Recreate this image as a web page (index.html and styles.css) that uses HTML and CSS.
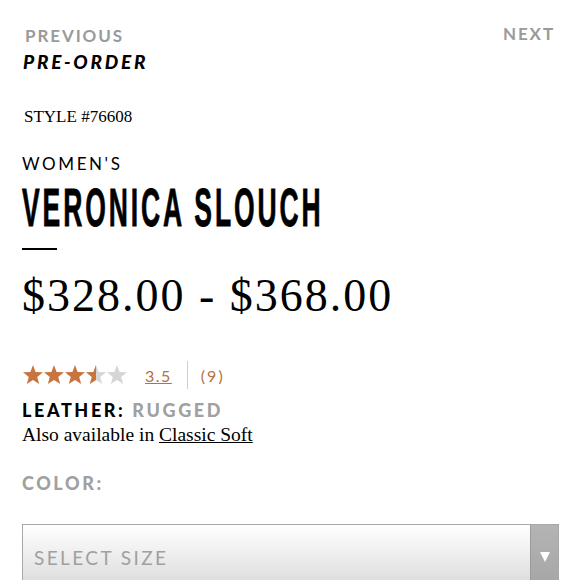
FILE: index.html
```html
<!DOCTYPE html>
<html>
<head>
<meta charset="utf-8">
<link rel="stylesheet" href="styles.css">
</head>
<body>
<div class="page">
  <div class="nav">
    <div class="nav-left">
      <div class="nav-link">PREVIOUS</div>
      <div class="preorder">PRE-ORDER</div>
    </div>
    <div class="nav-link next">NEXT</div>
  </div>
  <div class="style-no">STYLE #76608</div>
  <div class="gender">WOMEN'S</div>
  <h1 class="title"><span class="title-inner">VERONICA SLOUCH</span></h1>
  <div class="rule"></div>
  <div class="price">$328.00 - $368.00</div>
  <div class="rating">
    <svg class="stars" width="108" height="22" viewBox="0 0 108 22">
      <defs>
        <path id="star" d="M11 1 L13.6 7.9 L21 8.3 L15.2 12.9 L17.2 20.1 L11 16 L4.8 20.1 L6.8 12.9 L1 8.3 L8.4 7.9 Z"/>
        <clipPath id="half"><rect x="0" y="0" width="11" height="22"/></clipPath>
      </defs>
      <use href="#star" x="0" fill="#c8743f"/>
      <use href="#star" x="21" fill="#c8743f"/>
      <use href="#star" x="42" fill="#c8743f"/>
      <use href="#star" x="63" fill="#d6d6d6"/>
      <g transform="translate(63 0)"><use href="#star" fill="#c8743f" clip-path="url(#half)"/></g>
      <use href="#star" x="84" fill="#d6d6d6"/>
    </svg>
    <span class="score">3.5</span>
    <span class="sep"></span>
    <span class="count">(9)</span>
  </div>
  <div class="leather"><span class="label">LEATHER:</span> <span class="value">RUGGED</span></div>
  <div class="also">Also available in <span class="alt-link">Classic Soft</span></div>
  <div class="color-label">COLOR:</div>
  <div class="select">
    <span class="select-text">SELECT SIZE</span>
    <span class="select-btn"><span class="tri"></span></span>
  </div>
</div>
</body>
</html>
```
FILE: styles.css
```css
html, body {
  margin: 0;
  padding: 0;
  background: #fff;
}
.page {
  padding: 24px 22px 0 22px;
  overflow: hidden;
  height: 556px;
}
.nav {
  display: flex;
  justify-content: space-between;
  align-items: flex-start;
}
.nav-link {
  font-family: "Lato", sans-serif;
  font-weight: 700;
  font-size: 17px;
  line-height: 24px;
  letter-spacing: 1.9px;
  color: #9a9a9a;
  padding-left: 3px;
}
.next {
  padding-right: 3px;
  margin-top: -2px;
}
.preorder {
  font-family: "Lato", sans-serif;
  font-weight: 900;
  font-style: italic;
  font-size: 19px;
  line-height: 24px;
  letter-spacing: 2.8px;
  color: #000;
  margin-top: 2px;
  margin-left: 1px;
}
.style-no {
  font-family: "Liberation Serif", serif;
  font-size: 17px;
  line-height: 20px;
  color: #000;
  margin-top: 33px;
  padding-left: 2px;
}
.gender {
  font-family: "Lato", sans-serif;
  font-weight: 400;
  font-size: 17px;
  line-height: 20px;
  letter-spacing: 2.6px;
  color: #000;
  margin-top: 27px;
}
.title {
  margin: 9px 0 0 0;
  font-family: "Liberation Sans", sans-serif;
  font-weight: 700;
  font-size: 53px;
  line-height: 50px;
  color: #000;
  white-space: nowrap;
}
.title-inner {
  display: inline-block;
  transform: scaleX(0.5);
  transform-origin: left center;
  letter-spacing: 5.8px;
  -webkit-text-stroke: 0.8px #000;
}
.rule {
  width: 35px;
  height: 2px;
  background: #000;
  margin-top: 15px;
}
.price {
  font-family: "Liberation Serif", serif;
  font-size: 46px;
  line-height: 50px;
  letter-spacing: 2px;
  color: #000;
  margin-top: 21px;
}
.rating {
  display: flex;
  align-items: center;
  margin-top: 39px;
  height: 30px;
}
.stars {
  display: block;
}
.score {
  font-family: "Lato", sans-serif;
  font-size: 16px;
  letter-spacing: 1.5px;
  color: #b8703f;
  text-decoration: underline;
  margin-left: 15px;
}
.sep {
  width: 1px;
  height: 28px;
  background: #cfcfcf;
  margin-left: 15px;
}
.count {
  font-family: "Lato", sans-serif;
  font-size: 16px;
  letter-spacing: 2px;
  color: #b8703f;
  margin-left: 13px;
}
.leather {
  font-family: "Lato", sans-serif;
  font-weight: 900;
  font-size: 18px;
  line-height: 22px;
  letter-spacing: 2.6px;
  margin-top: 9px;
}
.label {
  color: #000;
}
.value {
  color: #a0a0a0;
}
.also {
  font-family: "Liberation Serif", serif;
  font-size: 19.5px;
  line-height: 24px;
  color: #000;
  margin-top: 2px;
}
.alt-link {
  text-decoration: underline;
}
.color-label {
  font-family: "Lato", sans-serif;
  font-weight: 900;
  font-size: 18px;
  line-height: 22px;
  letter-spacing: 2.6px;
  color: #a0a0a0;
  margin-top: 25px;
}
.select {
  display: flex;
  margin-top: 30px;
  height: 60px;
  border: 1px solid #a8a8a8;
  background: linear-gradient(#ffffff, #dcdcdc);
  margin-right: -1px;
}
.select-text {
  flex: 1;
  font-family: "Lato", sans-serif;
  font-size: 19px;
  letter-spacing: 2.4px;
  color: #a0a0a0;
  padding: 21px 0 0 11px;
}
.select-btn {
  width: 28px;
  border-left: 1px solid #9a9a9a;
  background: linear-gradient(#b4b4b4, #a6a6a6);
  display: flex;
  justify-content: center;
  padding-top: 27px;
  box-sizing: border-box;
}
.tri {
  width: 0;
  height: 0;
  border-left: 5px solid transparent;
  border-right: 5px solid transparent;
  border-top: 10px solid #fff;
}
```
